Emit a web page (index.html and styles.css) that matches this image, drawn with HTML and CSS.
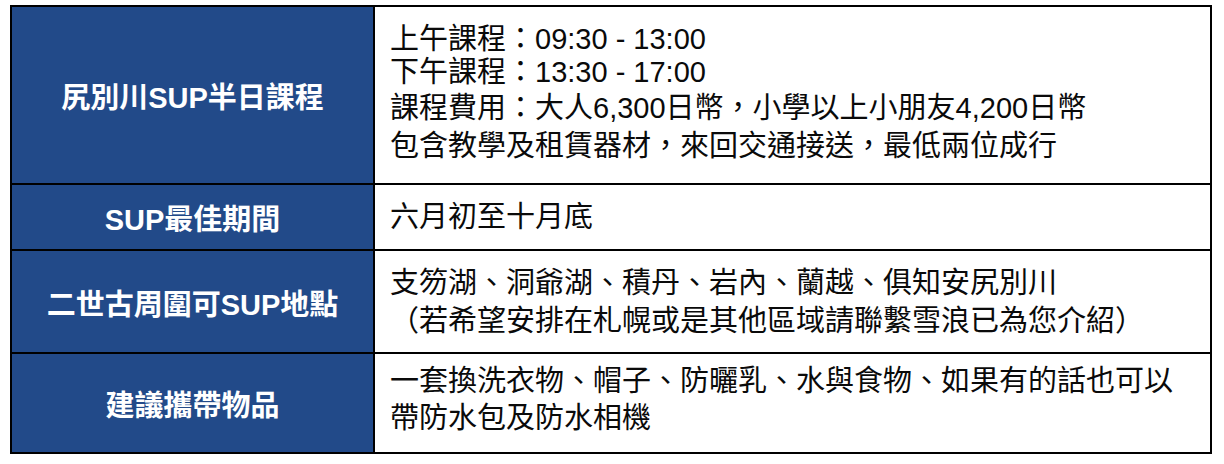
FILE: index.html
```html
<!DOCTYPE html>
<html lang="zh-Hant">
<head>
<meta charset="utf-8">
<title>尻別川SUP半日課程</title>
<link rel="stylesheet" href="styles.css">
</head>
<body>
<div class="page">
  <div class="info-table">
    <div class="label r1">尻別川SUP半日課程</div>
    <div class="value v1">
      <div class="ln a">上午課程：09:30 - 13:00</div>
      <div class="ln a">下午課程：13:30 - 17:00</div>
      <div class="ln b">課程費用：大人6,300日幣，小學以上小朋友4,200日幣</div>
      <div class="ln c">包含教學及租賃器材，來回交通接送，最低兩位成行</div>
    </div>

    <div class="label r2">SUP最佳期間</div>
    <div class="value v2">
      <div class="ln">六月初至十月底</div>
    </div>

    <div class="label r3">二世古周圍可SUP地點</div>
    <div class="value v3">
      <div class="ln">支笏湖、洞爺湖、積丹、岩內、蘭越、俱知安尻別川</div>
      <div class="ln">（若希望安排在札幌或是其他區域請聯繫雪浪已為您介紹）</div>
    </div>

    <div class="label r4">建議攜帶物品</div>
    <div class="value v4">
      <div class="ln">一套換洗衣物、帽子、防曬乳、水與食物、如果有的話也可以</div>
      <div class="ln">帶防水包及防水相機</div>
    </div>
  </div>
</div>
</body>
</html>
```

FILE: styles.css
```css
html, body {
  margin: 0;
  padding: 0;
  background: #ffffff;
}

.page {
  padding: 5px 0 0 10px;
}

.info-table {
  display: grid;
  width: 1202px;
  box-sizing: border-box;
  grid-template-columns: 361px 835px;
  grid-template-rows: 176px 64px 101px 98px;
  gap: 2px;
  padding: 2px;
  background: #000000;
  font-family: "Liberation Sans", "Noto Sans CJK TC", sans-serif;
  font-size: 29px;
}

.label {
  background: #224a89;
  color: #ffffff;
  font-weight: bold;
  display: flex;
  align-items: center;
  justify-content: center;
  white-space: nowrap;
}

.value {
  background: #ffffff;
  color: #0a0a0a;
  display: flex;
  flex-direction: column;
  justify-content: center;
  padding-left: 15px;
  white-space: nowrap;
}

.v1 {
  justify-content: flex-start;
  padding-top: 16px;
}

.v1 .ln.a { line-height: 33px; }
.v1 .ln.b { line-height: 38px; }
.v1 .ln.c { line-height: 38px; }

.v2 .ln { line-height: 38px; }

.v3 .ln { line-height: 38px; }

.v4 {
  padding-bottom: 6px;
}
.v4 .ln { line-height: 37px; }
```
